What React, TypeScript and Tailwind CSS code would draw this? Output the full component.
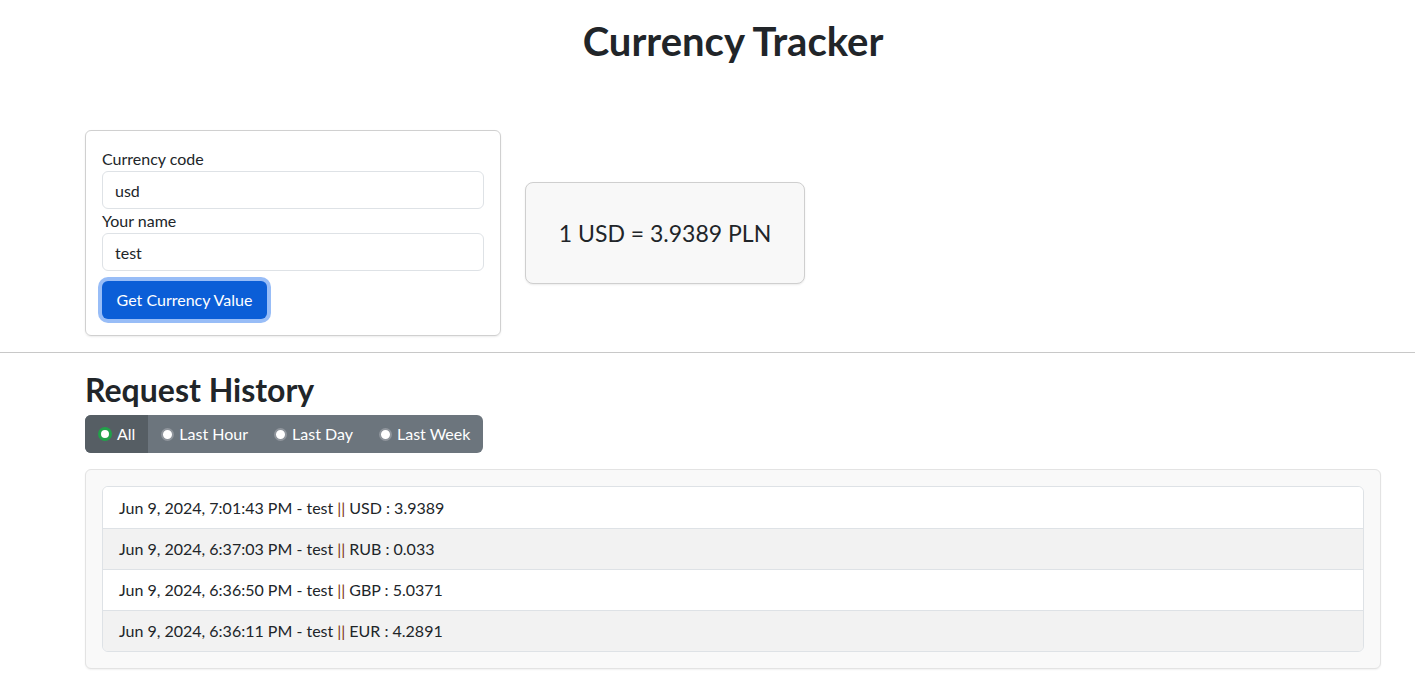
import React from "react";

const history = [
  { date: "Jun 9, 2024, 7:01:43 PM", name: "test", code: "USD", value: "3.9389" },
  { date: "Jun 9, 2024, 6:37:03 PM", name: "test", code: "RUB", value: "0.033" },
  { date: "Jun 9, 2024, 6:36:50 PM", name: "test", code: "GBP", value: "5.0371" },
  { date: "Jun 9, 2024, 6:36:11 PM", name: "test", code: "EUR", value: "4.2891" },
];

const filters = ["All", "Last Hour", "Last Day", "Last Week"];

function Radio({ checked }: { checked: boolean }) {
  return checked ? (
    <span className="inline-block h-[14px] w-[14px] rounded-full border-[3px] border-[#22a14a] bg-white" />
  ) : (
    <span className="inline-block h-[13px] w-[13px] rounded-full border-2 border-[#8f959c] bg-white" />
  );
}

export default function App() {
  return (
    <div className="min-h-screen bg-white text-[#212529] font-['Lato','Noto_Sans',sans-serif]">
      <div className="ml-[85px] w-[1296px]">
        <h1 className="pt-[17px] text-center text-[40px] font-bold leading-[48px]">Currency Tracker</h1>

        <div className="mt-[65px] flex items-center gap-[24px]">
          <div className="w-[416px] rounded-[6px] border border-[#d0d0d0] px-[16px] pb-[16px] pt-[16px] shadow-[0_1px_2px_rgba(0,0,0,0.08)]">
            <label className="block text-[16px] leading-[24px]">Currency code</label>
            <input
              readOnly
              value="usd"
              className="block h-[38px] w-full rounded-[6px] border border-[#dee2e6] px-[12px] text-[16px] outline-none"
            />
            <label className="block text-[16px] leading-[24px]">Your name</label>
            <input
              readOnly
              value="test"
              className="block h-[38px] w-full rounded-[6px] border border-[#dee2e6] px-[12px] text-[16px] outline-none"
            />
            <button
              type="button"
              className="mt-[10px] h-[38px] w-[165px] rounded-[6px] bg-[#0b5ed7] text-[16px] text-white ring-4 ring-[#98bdf7]"
            >
              Get Currency Value
            </button>
          </div>

          <div className="flex h-[102px] w-[280px] items-center justify-center rounded-[8px] border border-[#cfcfcf] bg-[#f8f8f8] text-[23px] shadow-[0_1px_2px_rgba(0,0,0,0.08)]">
            1 USD = 3.9389 PLN
          </div>
        </div>
      </div>

      <hr className="mt-[16px] border-t border-[#c8c8c8]" />

      <div className="ml-[85px] w-[1296px]">
        <h2 className="mt-[18px] text-[32px] font-bold leading-[38px]">Request History</h2>

        <div className="mt-[6px] inline-flex h-[38px] overflow-hidden rounded-[6px] bg-[#6c757d] text-[16px] text-white">
          {filters.map((f, i) => (
            <div
              key={f}
              className={
                i === 0
                  ? "flex items-center gap-[5px] bg-[#565e64] px-[13px]"
                  : "flex items-center gap-[5px] px-[13px]"
              }
            >
              <Radio checked={i === 0} />
              {f}
            </div>
          ))}
        </div>

        <div className="mt-[16px] rounded-[6px] border border-[#e3e3e3] bg-[#f9f9f9] p-[16px] shadow-[0_1px_2px_rgba(0,0,0,0.06)]">
          <div className="overflow-hidden rounded-[6px] border border-[#dee2e6]">
            {history.map((h, i) => (
              <div
                key={h.date}
                className={
                  (i % 2 === 0 ? "bg-white" : "bg-[#f2f2f2]") +
                  (i > 0 ? " border-t border-[#dee2e6]" : "") +
                  " flex h-[41px] items-center px-[16px] text-[16px]"
                }
              >
                {h.date} - {h.name} <span className="mx-[4px] text-[#7a2e0c]">||</span> {h.code} : {h.value}
              </div>
            ))}
          </div>
        </div>
      </div>
    </div>
  );
}
